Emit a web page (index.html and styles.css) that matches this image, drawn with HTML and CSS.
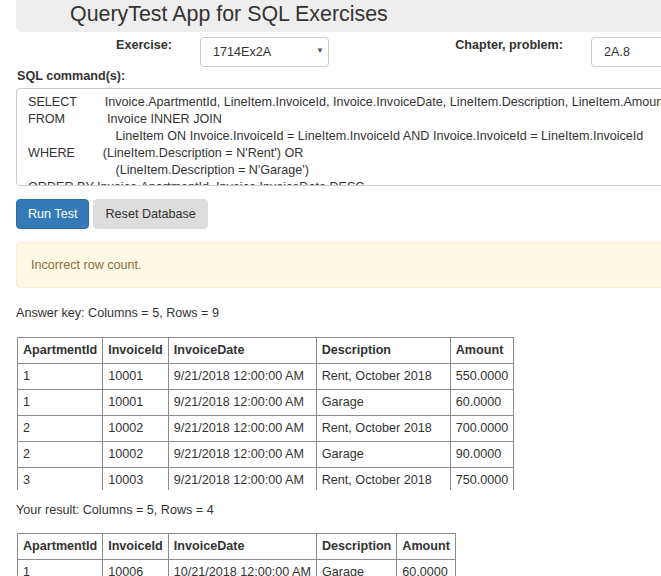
FILE: index.html
```html
<!DOCTYPE html>
<html lang="en">
<head>
<meta charset="utf-8">
<title>QueryTest App for SQL Exercises</title>
<link rel="stylesheet" href="styles.css">
</head>
<body>
<div class="page">
  <header class="jumbotron">
    <h1 class="title">QueryTest App for SQL Exercises</h1>
  </header>

  <div class="form-row">
    <label class="lbl lbl-ex" for="exercise">Exercise:</label>
    <span class="select-wrap">
      <select id="exercise" class="control select">
        <option>1714Ex2A</option>
      </select>
      <span class="caret">&#9660;</span>
    </span>
    <label class="lbl lbl-ch" for="chapter">Chapter, problem:</label>
    <input id="chapter" class="control input" type="text" value="2A.8">
  </div>

  <label class="lbl lbl-sql" for="sql">SQL command(s):</label>
  <textarea id="sql" class="sql" wrap="off" spellcheck="false">SELECT        Invoice.ApartmentId, LineItem.InvoiceId, Invoice.InvoiceDate, LineItem.Description, LineItem.Amount
FROM            Invoice INNER JOIN
                         LineItem ON Invoice.InvoiceId = LineItem.InvoiceId AND Invoice.InvoiceId = LineItem.InvoiceId
WHERE        (LineItem.Description = N'Rent') OR
                         (LineItem.Description = N'Garage')
ORDER BY Invoice.ApartmentId, Invoice.InvoiceDate DESC</textarea>

  <div class="buttons">
    <button class="btn btn-primary" type="button">Run Test</button>
    <button class="btn btn-gray" type="button">Reset Database</button>
  </div>

  <div class="alert">Incorrect row count.</div>

  <p class="summary summary-key">Answer key: Columns = 5, Rows = 9</p>
  <div class="table-scroll">
    <table class="grid grid-key">
      <thead>
        <tr><th class="c1">ApartmentId</th><th class="c2">InvoiceId</th><th class="c3">InvoiceDate</th><th class="c4">Description</th><th class="c5">Amount</th></tr>
      </thead>
      <tbody>
        <tr><td>1</td><td>10001</td><td>9/21/2018 12:00:00 AM</td><td>Rent, October 2018</td><td>550.0000</td></tr>
        <tr><td>1</td><td>10001</td><td>9/21/2018 12:00:00 AM</td><td>Garage</td><td>60.0000</td></tr>
        <tr><td>2</td><td>10002</td><td>9/21/2018 12:00:00 AM</td><td>Rent, October 2018</td><td>700.0000</td></tr>
        <tr><td>2</td><td>10002</td><td>9/21/2018 12:00:00 AM</td><td>Garage</td><td>90.0000</td></tr>
        <tr><td>3</td><td>10003</td><td>9/21/2018 12:00:00 AM</td><td>Rent, October 2018</td><td>750.0000</td></tr>
      </tbody>
    </table>
  </div>

  <p class="summary summary-result">Your result: Columns = 5, Rows = 4</p>
  <div class="table-scroll">
    <table class="grid">
      <thead>
        <tr><th>ApartmentId</th><th>InvoiceId</th><th>InvoiceDate</th><th>Description</th><th>Amount</th></tr>
      </thead>
      <tbody>
        <tr><td>1</td><td>10006</td><td>10/21/2018 12:00:00 AM</td><td>Garage</td><td>60.0000</td></tr>
      </tbody>
    </table>
  </div>
</div>
</body>
</html>
```

FILE: styles.css
```css
* { box-sizing: border-box; }

html, body {
  margin: 0;
  padding: 0;
  overflow: hidden;
  background: #fff;
}

body {
  font-family: "Liberation Sans", Arial, sans-serif;
  font-size: 12.6px;
  line-height: 18px;
  color: #333;
}

.page {
  width: 780px;
  padding-left: 16px;
}

.jumbotron {
  background: #eee;
  height: 32px;
  border-radius: 0 0 0 6px;
  padding-left: 54px;
}

.title {
  margin: 0;
  font-weight: 400;
  font-size: 21.4px;
  line-height: 28px;
  color: #333;
}

.form-row {
  display: flex;
  align-items: flex-start;
  margin-top: 4px;
  height: 30px;
}

.lbl {
  font-weight: 700;
  display: block;
}

.lbl-ex {
  width: 156px;
  text-align: right;
  margin-right: 28px;
}

.lbl-ch {
  width: 234px;
  text-align: right;
  margin-right: 28px;
}

.control {
  font-family: inherit;
  font-size: 12.6px;
  color: #555;
  height: 30px;
  margin-top: 1px;
  border: 1px solid #ccc;
  border-radius: 4px;
  background: #fff;
  padding: 0 12px;
  outline: none;
}

.select-wrap {
  position: relative;
  display: block;
}

.select {
  width: 129px;
  appearance: none;
  -webkit-appearance: none;
  color: #333;
}

.caret {
  position: absolute;
  right: 5px;
  top: 9px;
  font-size: 8px;
  line-height: 12px;
  color: #555;
  pointer-events: none;
}

.input {
  width: 150px;
  color: #333;
}

.lbl-sql {
  margin-top: 1px;
  padding-left: 1px;
  height: 19px;
}

.sql {
  display: block;
  width: 760px;
  height: 98px;
  margin-top: 2px;
  border: 1px solid #ccc;
  border-radius: 4px;
  padding: 5px 11px;
  font-family: "Liberation Sans", Arial, sans-serif;
  font-size: 12.6px;
  line-height: 17px;
  color: #333;
  white-space: pre;
  overflow: hidden;
  resize: none;
  outline: none;
}

.buttons {
  display: flex;
  gap: 4px;
  margin-top: 13px;
}

.btn {
  font-family: inherit;
  font-size: 12.6px;
  line-height: 18px;
  height: 30px;
  padding: 5px 11px;
  border-radius: 4px;
  border: 1px solid transparent;
  cursor: pointer;
}

.btn-primary {
  background: #337ab7;
  border-color: #2e6da4;
  color: #fff;
}

.btn-gray {
  background: #ddd;
  border-color: #ddd;
  color: #333;
}

.alert {
  margin-top: 13px;
  width: 760px;
  padding: 13px 14px;
  background: #fcf8e3;
  border: 1px solid #faebcc;
  border-radius: 4px;
  color: #8a6d3b;
}

.summary {
  margin: 16px 0 15px 0;
}

.summary-result {
  margin: 11px 0 14px 0;
}

.table-scroll {
  overflow: hidden;
  max-height: 153px;
  padding-left: 1px;
}

.grid {
  border-collapse: collapse;
}

.grid th,
.grid td {
  border: 1px solid #8c8c8c;
  padding: 4px 5px;
  line-height: 17px;
  text-align: left;
  white-space: nowrap;
}

.grid th {
  font-weight: 700;
}

.grid-key .c3 { width: 148px; }
.grid-key .c4 { width: 134px; }
```
